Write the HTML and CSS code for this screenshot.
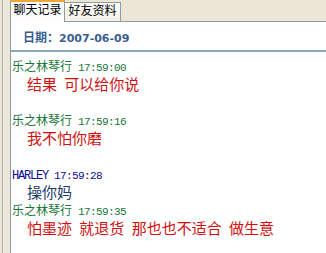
FILE: index.html
```html
<!DOCTYPE html>
<html lang="zh-CN">
<head>
<meta charset="utf-8">
<link rel="stylesheet" href="styles.css">
</head>
<body>
<div class="gutter"></div>
<div class="main">
  <div class="tabbar">
    <div class="tab active">聊天记录</div>
    <div class="tab">好友资料</div>
  </div>
  <div class="panel">
    <div class="date">日期：<span class="num">2007-06-09</span></div>
    <div class="log">
      <div class="entry gap">
        <div class="head"><span class="name">乐之林琴行</span><span class="time">17:59:00</span></div>
        <div class="msg red">结果 可以给你说</div>
      </div>
      <div class="entry gap">
        <div class="head"><span class="name">乐之林琴行</span><span class="time">17:59:16</span></div>
        <div class="msg red">我不怕你磨</div>
      </div>
      <div class="entry">
        <div class="head other"><span class="name latin">HARLEY</span><span class="time">17:59:28</span></div>
        <div class="msg navy">操你妈</div>
      </div>
      <div class="entry">
        <div class="head"><span class="name">乐之林琴行</span><span class="time">17:59:35</span></div>
        <div class="msg red">怕墨迹 就退货 那也也不适合 做生意</div>
      </div>
    </div>
  </div>
</div>
</body>
</html>
```
FILE: styles.css
```css
html, body {
  margin: 0;
  padding: 0;
}
body {
  width: 326px;
  height: 253px;
  overflow: hidden;
  display: flex;
  background: #ece7d8;
  font-family: "Noto Sans CJK SC", sans-serif;
}
.gutter {
  width: 10px;
  flex: none;
  background: linear-gradient(to right, #ece7d8 2px, #aaa9a2 2px, #aaa9a2 3px, #f3f0e6 3px, #ece7d8 5px);
}
.main {
  flex: 1;
  min-width: 0;
  display: flex;
  flex-direction: column;
}
.tabbar {
  height: 21px;
  flex: none;
  display: flex;
  align-items: flex-end;
  border-bottom: 1px solid #8f9ca6;
  background: #ece6d6;
}
.tab {
  box-sizing: border-box;
  height: 19px;
  width: 56px;
  text-align: center;
  font-size: 12px;
  line-height: 12px;
  padding-top: 1px;
  color: #000;
  border-top: 1px solid #919b9c;
  border-right: 1px solid #919b9c;
  background: linear-gradient(#fefefd, #f2f0e8);
}
.tab.active {
  width: 55px;
  height: 22px;
  padding-top: 0;
  line-height: 13px;
  margin-bottom: -1px;
  border-left: 1px solid #919b9c;
  border-top: 2px solid #f2a53a;
  background: #fdfdfd;
  position: relative;
  z-index: 1;
}
.panel {
  flex: 1;
  background: #fff;
  border-left: 1px solid #8e9ba6;
}
.date {
  padding: 6px 0 2px 12px;
  line-height: 18px;
  font-size: 12px;
  font-weight: bold;
  color: #3a5e90;
  border-bottom: 2px solid #8ba6c0;
}
.date .num {
  font-family: "DejaVu Sans", sans-serif;
  font-size: 11px;
}
.log {
  padding: 5px 0 0 1px;
}
.entry.gap {
  margin-bottom: 18px;
}
.head {
  height: 18px;
  line-height: 18px;
  font-size: 12px;
  color: #177438;
  white-space: nowrap;
}
.head.other {
  color: #0a0a96;
}
.time {
  font-family: "Liberation Mono", monospace;
  font-size: 11px;
  letter-spacing: -0.6px;
  margin-left: 6px;
}
.name.latin {
  font-family: "Liberation Mono", monospace;
  font-size: 12px;
  letter-spacing: -1.2px;
}
.msg {
  height: 18px;
  line-height: 18px;
  padding-left: 15px;
  font-size: 15px;
  word-spacing: 4px;
  white-space: nowrap;
}
.msg.red {
  color: #d10f0f;
}
.msg.navy {
  color: #1b3d6a;
}
```
